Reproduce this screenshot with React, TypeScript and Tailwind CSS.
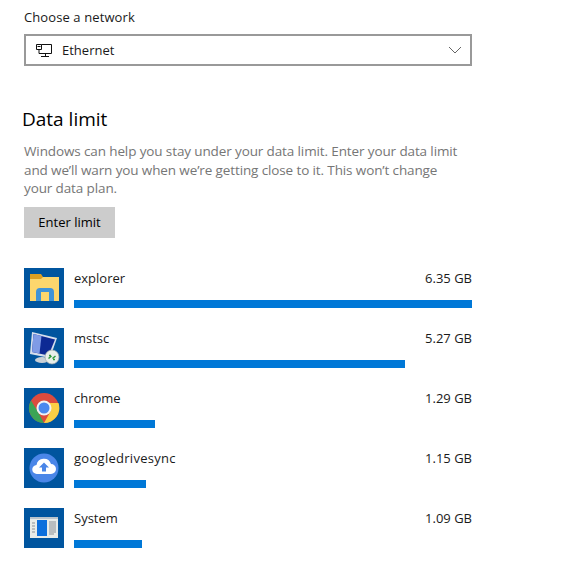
import React from 'react'

const ExplorerIcon = () => (
  <svg width="40" height="40" viewBox="0 0 40 40">
    <rect width="40" height="40" fill="#00559f" />
    <path d="M6 6h11l2 3h16v3H6z" fill="#dd9f22" />
    <path d="M6 11l11 0 2-2h16v24H6z" fill="#fcd66d" />
    <path d="M12 33v-9a4 4 0 0 1 4-4h10a4 4 0 0 1 4 4v9h-5v-9h-8v9z" fill="#3f93d8" />
  </svg>
)

const MstscIcon = () => (
  <svg width="40" height="40" viewBox="0 0 40 40">
    <rect width="40" height="40" fill="#00559f" />
    <ellipse cx="18" cy="32" rx="7" ry="3" fill="#c9d0d6" />
    <path d="M8 4l25 6-7 20-20-4z" fill="#d5deec" />
    <path d="M9.500 6l21.500 5.500-6.500 16L8 24z" fill="#0d2a94" />
    <path d="M9.500 6l8 2-2 17.500L8 24z" fill="#7f9be6" />
    <circle cx="28" cy="29" r="7" fill="#e9eee9" stroke="#9aa5a8" strokeWidth=".7" />
    <path d="M24.500 30.500l3-2.500M28.500 30.500l3-2.500M25 27.500h2M29 31.500h2" stroke="#2f9a3c" strokeWidth="1.500" fill="none" />
  </svg>
)

const ChromeIcon = () => (
  <svg width="40" height="40" viewBox="0 0 40 40">
    <rect width="40" height="40" fill="#00559f" />
    <circle cx="20" cy="20" r="15" fill="#dc4b3e" />
    <path d="M20 35A15 15 0 0 1 7 12.500L14 24z" fill="#3ba456" />
    <path d="M20 35l7-12.500-1-2.500-1-5h9.500A15 15 0 0 1 20 35z" fill="#fbcf45" />
    <circle cx="20" cy="20" r="7.500" fill="#f1f3f4" />
    <circle cx="20" cy="20" r="5.500" fill="#4b88ee" />
  </svg>
)

const DriveSyncIcon = () => (
  <svg width="40" height="40" viewBox="0 0 40 40">
    <rect width="40" height="40" fill="#00559f" />
    <circle cx="20" cy="20" r="14.500" fill="#4a86e8" />
    <path d="M13 26a4.500 4.500 0 0 1-.5-9 7.500 7.500 0 0 1 14.500-1 5 5 0 0 1 0 10z" fill="#fff" />
    <path d="M20 14.500l5 5h-3v4h-4v-4h-3z" fill="#4a86e8" />
  </svg>
)

const SystemIcon = () => (
  <svg width="40" height="40" viewBox="0 0 40 40">
    <rect width="40" height="40" fill="#00559f" />
    <rect x="6" y="9" width="28" height="21" fill="#e8ebe8" />
    <rect x="6" y="9" width="28" height="2" fill="#b9c4cc" />
    <rect x="13" y="12" width="10" height="16" fill="#0c6fdc" />
    <path d="M8 15h3M8 18h3M8 21h3M8 24h3" stroke="#8b9197" strokeWidth="1" />
    <path d="M25 14h7M25 16h7M25 18h7M25 20h7M25 22h7M25 24h7M25 26h5" stroke="#8b9197" strokeWidth="1" />
  </svg>
)

const NetworkIcon = () => (
  <svg width="16" height="16" viewBox="0 0 16 16" fill="none" stroke="#111" strokeWidth="1">
    <path d="M5.500 2.500h10v9h-12.500" />
    <path d="M.5 2.500h5v5h-5zM1.500 4.500h3" />
    <path d="M3 7.500v4M9.500 11.500v3M5 14.500h8" />
  </svg>
)

const apps = [
  { name: 'explorer', usage: '6.35 GB', barClass: 'w-[398px]', icon: <ExplorerIcon /> },
  { name: 'mstsc', usage: '5.27 GB', barClass: 'w-[331px]', icon: <MstscIcon /> },
  { name: 'chrome', usage: '1.29 GB', barClass: 'w-[81px]', icon: <ChromeIcon /> },
  { name: 'googledrivesync', usage: '1.15 GB', barClass: 'w-[72px]', icon: <DriveSyncIcon />, nameClass: 'tracking-[0.28px]' },
  { name: 'System', usage: '1.09 GB', barClass: 'w-[68px]', icon: <SystemIcon /> },
]

export default function App() {
  return (
    <div className="w-[561px] h-[562px] overflow-hidden bg-white text-[#1a1a1a] font-['Open_Sans','Noto_Sans',sans-serif] text-[13px]">
      <div className="w-[448px] ml-6 pt-[8px]">
        <p className="leading-[18px] tracking-[0.1px]">Choose a network</p>
        <div className="mt-2 h-8 border-2 border-[#999999] flex items-center pl-[10px] pr-[8px]">
          <NetworkIcon />
          <span className="ml-[10px] flex-1 leading-[18px]">Ethernet</span>
          <svg width="14" height="8" viewBox="0 0 14 8" fill="none" stroke="#666" strokeWidth="1">
            <path d="M1 1l6 6 6-6" />
          </svg>
        </div>

        <h2 className="mt-[39px] -ml-[2px] text-[19px] leading-[28px] text-black">Data limit</h2>
        <p className="mt-[9px] w-[440px] text-[13.500px] leading-[18.500px] text-[#767676] tracking-[-0.12px]">
          Windows can help you stay under your data limit. Enter your data limit and we’ll warn you when
          we’re getting close to it. This won’t change your data plan.
        </p>
        <button className="mt-[9px] block h-[31px] w-[91px] pt-[2px] bg-[#cccccc] text-[13px] text-black">Enter limit</button>

        <div className="mt-[30px] flex flex-col gap-5">
          {apps.map((app) => (
            <div key={app.name} className="flex h-10 gap-[10px]">
              {app.icon}
              <div className="flex-1 flex flex-col justify-between">
                <div className="flex justify-between leading-[20px]">
                  <span className={app.nameClass}>{app.name}</span>
                  <span>{app.usage}</span>
                </div>
                <div className={`h-2 bg-[#0078d7] ${app.barClass}`} />
              </div>
            </div>
          ))}
        </div>
      </div>
    </div>
  )
}
